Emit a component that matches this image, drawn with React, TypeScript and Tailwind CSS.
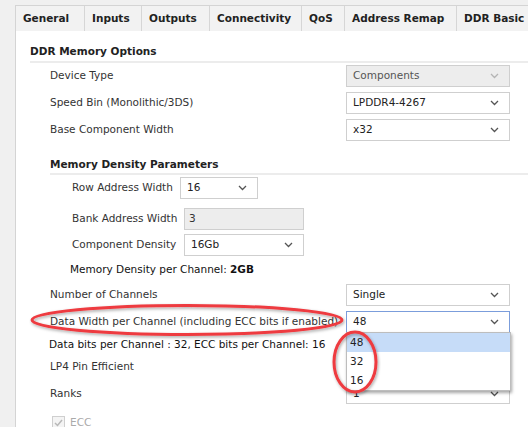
import React from 'react'

const Chevron = ({ muted = false }: { muted?: boolean }) => (
  <svg width="9" height="6" viewBox="0 0 9 6" className="shrink-0">
    <path d="M1 1 L4.5 4.5 L8 1" fill="none" stroke={muted ? '#b4b4b4' : '#555'} strokeWidth="1.3" />
  </svg>
)

const Select = ({ value, className = '', disabled = false, focused = false }: { value: string; className?: string; disabled?: boolean; focused?: boolean }) => (
  <div
    className={`h-[22px] flex items-center justify-between pl-[6px] pr-[10px] border ${
      focused ? 'border-[#7b9ddb]' : 'border-[#cfcfcf]'
    } ${disabled ? 'bg-[#ededed] text-[#555]' : 'bg-white text-[#222]'} ${className}`}
  >
    <span>{value}</span>
    <Chevron muted={disabled} />
  </div>
)

const Row = ({ label, children }: { label: string; children?: React.ReactNode }) => (
  <div className="h-[22px] flex items-center justify-between pl-[20px] pr-[18px] mb-[5px]">
    <span className="text-[#333] whitespace-nowrap">{label}</span>
    {children}
  </div>
)

const tabs: [string, string][] = [
  ['General', 'w-[68px]'],
  ['Inputs', 'w-[57px]'],
  ['Outputs', 'w-[68px]'],
  ['Connectivity', 'w-[92px]'],
  ['QoS', 'w-[43px]'],
  ['Address Remap', 'w-[112px]'],
  ['DDR Basic', 'w-[80px]'],
]

export default function App() {
  return (
    <div className="relative w-[528px] h-[427px] overflow-hidden bg-[#f0f0f0] pl-[15px] pt-[5px] text-[10.5px] font-['DejaVu_Sans',sans-serif]">
      <div className="h-full border-l border-t border-[#d4d4d4] bg-white">
        {/* tab strip */}
        <div className="h-[25px] flex bg-[#f2f2f2] font-bold text-[#222] whitespace-nowrap">
          {tabs.map(([t, w], i) => (
            <div key={t} className={`shrink-0 flex items-center pl-[7px] ${w} ${i > 0 ? 'border-l border-[#d6d6d6]' : ''}`}>
              {t}
            </div>
          ))}
        </div>

        <div className="pl-[14px]">
          <div className="mt-[12px] pb-[2px] border-b-2 border-[#ececec] font-bold text-[#222] leading-[16px]">DDR Memory Options</div>
          <div className="mt-[2px]">
            <Row label="Device Type">
              <Select value="Components" disabled className="w-[164px]" />
            </Row>
            <Row label="Speed Bin (Monolithic/3DS)">
              <Select value="LPDDR4-4267" className="w-[164px]" />
            </Row>
            <Row label="Base Component Width">
              <Select value="x32" className="w-[164px]" />
            </Row>
          </div>

          <div className="ml-[20px] mt-[15px] pb-[1px] border-b-2 border-[#ececec] font-bold text-[#222] leading-[16px]">Memory Density Parameters</div>
          <div className="ml-[42px] mt-[2px]">
            <div className="h-[22px] flex items-center">
              <span className="text-[#333] w-[108px] whitespace-nowrap">Row Address Width</span>
              <Select value="16" className="w-[78px]" />
            </div>
            <div className="h-[22px] flex items-center mt-[9px]">
              <span className="text-[#333] w-[112px] whitespace-nowrap">Bank Address Width</span>
              <div className="h-[22px] w-[120px] border border-[#cfcfcf] bg-[#ededed] flex items-center pl-[4px] text-[#333]">3</div>
            </div>
            <div className="h-[22px] flex items-center mt-[4px]">
              <span className="text-[#333] w-[112px] whitespace-nowrap">Component Density</span>
              <Select value="16Gb" className="w-[120px]" />
            </div>
            <div className="h-[14px] flex items-center mt-[7px] -ml-[2px] text-[#111] whitespace-nowrap">
              Memory Density per Channel:&nbsp;<span className="font-bold">2GB</span>
            </div>
          </div>

          <div className="mt-[7px]">
            <Row label="Number of Channels">
              <Select value="Single" className="w-[164px]" />
            </Row>
            <Row label="Data Width per Channel (including ECC bits if enabled)">
              <Select value="48" focused className="w-[164px]" />
            </Row>
            <div className="h-[14px] flex items-center pl-[19px] text-[#111] whitespace-nowrap">
              Data bits per Channel : 32, ECC bits per Channel: 16
            </div>
            <div className="h-[14px] flex items-center pl-[20px] mt-[8px] text-[#333]">LP4 Pin Efficient</div>
            <div className="h-[20px] flex items-center justify-between pl-[20px] pr-[18px] mt-[10px]">
              <span className="text-[#333]">Ranks</span>
              <div className="h-[20px] w-[164px] flex items-center justify-between pl-[6px] pr-[10px] border border-[#cfcfcf] text-[#222]">
                <span>1</span>
                <Chevron />
              </div>
            </div>
            <div className="flex items-center gap-[5px] pl-[22px] mt-[11px] text-[#aaa]">
              <div className="w-[13px] h-[13px] border border-[#cfcfcf] bg-[#f4f4f4] flex items-center justify-center">
                <svg width="9" height="8" viewBox="0 0 9 8">
                  <path d="M1 4 L3.5 6.5 L8 1" fill="none" stroke="#b8b8b8" strokeWidth="1.5" />
                </svg>
              </div>
              <span>ECC</span>
            </div>
          </div>
        </div>
      </div>

      {/* open dropdown list */}
      <div className="absolute left-[346px] top-[332px] w-[165px] bg-white border border-[#bdbdbd] shadow-[1px_2px_3px_rgba(0,0,0,0.35)] text-[#222]">
        <div className="h-[19px] flex items-center pl-[3px] bg-[#c6dcf8]">48</div>
        <div className="h-[19px] flex items-center pl-[3px]">32</div>
        <div className="h-[19px] flex items-center pl-[3px]">16</div>
      </div>

      {/* red annotation marks */}
      <svg className="absolute left-0 top-0 pointer-events-none" width="528" height="427">
        <defs>
          <filter id="sh" x="-10%" y="-30%" width="120%" height="160%">
            <feDropShadow dx="1" dy="1.5" stdDeviation="1.5" floodColor="#000" floodOpacity="0.35" />
          </filter>
        </defs>
        <ellipse cx="187" cy="320" rx="155" ry="14.5" fill="none" stroke="#ee3a3f" strokeWidth="3" filter="url(#sh)" />
        <ellipse cx="355" cy="362" rx="21" ry="30" fill="none" stroke="#ee3a3f" strokeWidth="3" filter="url(#sh)" />
      </svg>
    </div>
  )
}
